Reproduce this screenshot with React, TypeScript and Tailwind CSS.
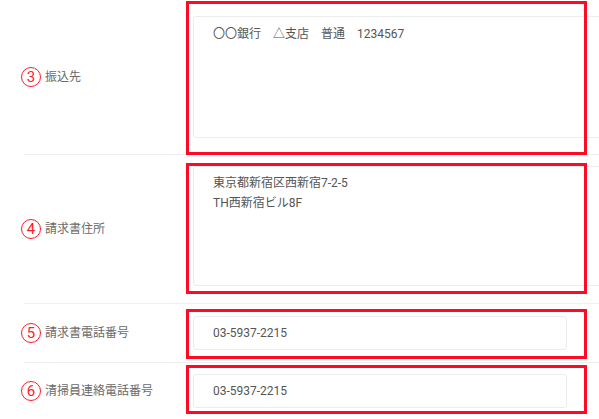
import React from "react";

const font = "font-['Roboto','Noto_Sans_CJK_JP',sans-serif]";

function Num({ n }: { n: string }) {
  return (
    <span className="-ml-[3px] mr-[4px] flex h-[20px] w-[20px] items-center justify-center rounded-full border border-[#ff1a2e] text-[15px] leading-none text-[#ff1a2e]">
      {n}
    </span>
  );
}

function Label({ n, text }: { n: string; text: string }) {
  return (
    <div className="flex w-[169px] shrink-0 items-center">
      <Num n={n} />
      <span className="text-[12px] text-[#6a6a6a]">{text}</span>
    </div>
  );
}

// red annotation frame laid over the field
function Mark({ className }: { className: string }) {
  return (
    <div
      aria-hidden
      className={`pointer-events-none absolute left-[-7px] w-[401px] border-[3px] border-[#ff0a24] ${className}`}
    />
  );
}

export default function App() {
  return (
    <div className={`h-[419px] w-[599px] overflow-hidden bg-white pl-[24px] ${font}`}>
      {/* 振込先 */}
      <div className="flex h-[155px] border-b border-[#efefef]">
        <Label n="3" text="振込先" />
        <div className="relative flex-1">
          <textarea
            readOnly
            defaultValue={"〇〇銀行　△支店　普通　1234567"}
            className="mt-[16px] h-[122px] w-[430px] resize-none rounded-[3px] border border-[#ececec] px-[19px] pt-[7px] text-[12px] leading-[20px] text-[#555] outline-none"
          />
          <Mark className="top-[1px] h-[154px]" />
        </div>
      </div>

      {/* 請求書住所 */}
      <div className="flex h-[149px] border-b border-[#efefef]">
        <Label n="4" text="請求書住所" />
        <div className="relative flex-1">
          <textarea
            readOnly
            defaultValue={"東京都新宿区西新宿7-2-5\nTH西新宿ビル8F"}
            className="mt-[11px] h-[120px] w-[430px] resize-none rounded-[3px] border border-[#ececec] px-[19px] pt-[6px] text-[12px] leading-[20px] text-[#555] outline-none"
          />
          <Mark className="top-[8px] h-[131px]" />
        </div>
      </div>

      {/* 請求書電話番号 */}
      <div className="flex h-[59px] border-b border-[#efefef]">
        <Label n="5" text="請求書電話番号" />
        <div className="relative flex-1">
          <input
            readOnly
            defaultValue="03-5937-2215"
            className="mt-[12px] h-[34px] w-[374px] rounded-[3px] border border-[#ececec] px-[19px] text-[12px] text-[#555] outline-none"
          />
          <Mark className="top-[5px] h-[50px]" />
        </div>
      </div>

      {/* 清掃員連絡電話番号 */}
      <div className="flex h-[56px]">
        <Label n="6" text="清掃員連絡電話番号" />
        <div className="relative flex-1">
          <input
            readOnly
            defaultValue="03-5937-2215"
            className="mt-[11px] h-[34px] w-[374px] rounded-[3px] border border-[#ececec] px-[19px] text-[12px] text-[#555] outline-none"
          />
          <Mark className="top-[2px] h-[49px]" />
        </div>
      </div>
    </div>
  );
}
